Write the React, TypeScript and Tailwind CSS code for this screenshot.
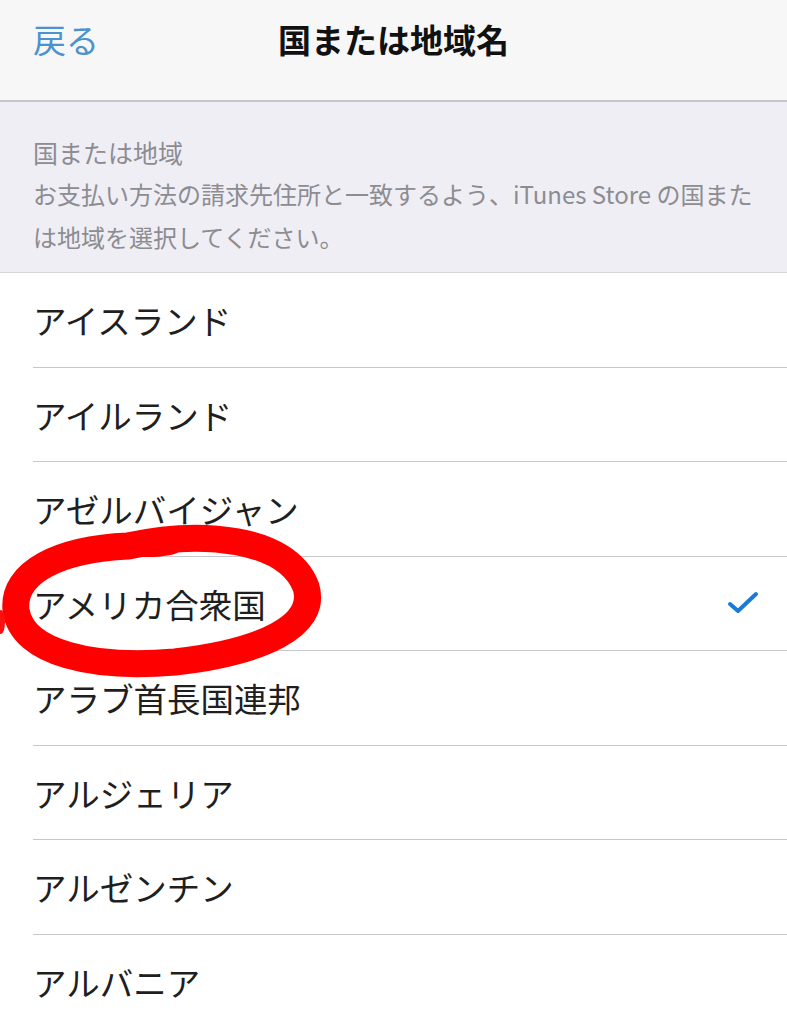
import React from "react";

const countries = [
  "アイスランド",
  "アイルランド",
  "アゼルバイジャン",
  "アメリカ合衆国",
  "アラブ首長国連邦",
  "アルジェリア",
  "アルゼンチン",
  "アルバニア",
];

const selected = "アメリカ合衆国";

function Check() {
  return (
    <svg width="32" height="24" viewBox="0 0 32 24" fill="none">
      <path
        d="M3 13 L11 20 L29 3"
        stroke="#1c7ad6"
        strokeWidth="4"
        strokeLinecap="round"
        strokeLinejoin="round"
      />
    </svg>
  );
}

export default function App() {
  return (
    <div
      className="relative w-[787px] h-[1024px] overflow-hidden bg-white"
      style={{ fontFamily: '"Noto Sans CJK JP", "Noto Sans", sans-serif' }}
    >
      {/* nav bar */}
      <header className="h-[102px] bg-[#f7f7f8] border-b-2 border-[#c6c6c9] grid grid-cols-[1fr_auto_1fr] items-center pb-[22px] px-[33px]">
        <span className="text-[33px] text-[#4a93cf] leading-none">戻る</span>
        <h1 className="text-[33px] font-bold text-[#111] leading-none">国または地域名</h1>
        <span />
      </header>

      {/* section header */}
      <section className="h-[171px] bg-[#efeef5] border-b border-[#d6d6da] px-[33px] pt-[30px]">
        <p className="text-[25px] leading-[40px] text-[#8c8c91]">国または地域</p>
        <p className="text-[24px] leading-[43px] text-[#8c8c91] whitespace-nowrap">
          お支払い方法の請求先住所と一致するよう、iTunes Store の国また
          <br />
          は地域を選択してください。
        </p>
      </section>

      {/* list */}
      <ul>
        {countries.map((c) => (
          <li
            key={c}
            className="ml-[33px] h-[94.5px] border-b border-[#c8c8cc] flex items-center justify-between pr-[28px]"
          >
            <span className="text-[33.5px] text-[#1f1f21] leading-none">{c}</span>
            {c === selected && <Check />}
          </li>
        ))}
      </ul>

      {/* red hand-drawn circle annotation */}
      <svg
        className="absolute inset-0 pointer-events-none"
        width="787"
        height="1024"
        viewBox="0 0 787 1024"
      >
        <path
          d="M128 546 C 200 530, 287 537, 306 587 C 318 626, 262 652, 175 662 C 95 669, 22 654, 16 610 C 12 572, 60 549, 128 546"
          fill="none"
          stroke="#ff0000"
          strokeWidth="27"
          strokeLinecap="round"
        />
        <ellipse cx="148" cy="550" rx="32" ry="7" fill="#ff0000" />
        <ellipse cx="1" cy="622" rx="4" ry="12" fill="#ff1010" />
      </svg>
    </div>
  );
}
